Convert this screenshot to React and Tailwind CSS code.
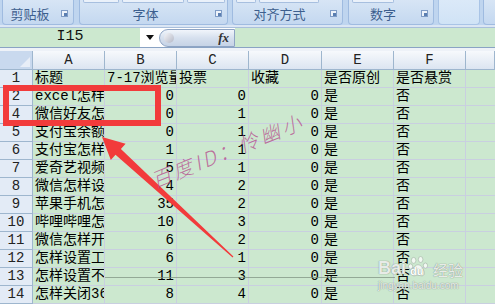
import React from "react"

const cols = [33, 72, 72, 72, 73, 72, 72, 29]
const letters = ["A", "B", "C", "D", "E", "F", ""]

const rows = [
    ["1", "标题", "7-17浏览量", "投票", "收藏", "是否原创", "是否悬赏"],
    ["2", "excel怎样", "0", "0", "0", "是", "否"],
    ["4", "微信好友怎", "0", "1", "0", "是", "否"],
    ["5", "支付宝余额", "0", "1", "0", "是", "否"],
    ["6", "支付宝怎样", "1", "1", "0", "是", "否"],
    ["7", "爱奇艺视频", "5", "1", "0", "是", "否"],
    ["8", "微信怎样设", "4", "2", "0", "是", "否"],
    ["9", "苹果手机怎", "35", "2", "0", "是", "否"],
    ["10", "哔哩哔哩怎", "10", "3", "0", "是", "否"],
    ["11", "微信怎样开", "6", "2", "0", "是", "否"],
    ["12", "怎样设置工", "6", "1", "0", "是", "否"],
    ["13", "怎样设置不", "11", "3", "0", "是", "否"],
    ["14", "怎样关闭360", "8", "4", "0", "是", "否"],
]

const cellFont = { fontFamily: "'Liberation Mono', 'Noto Sans CJK SC', monospace" }

const Launcher = () => (
    <span className="inline-block w-[7px] h-[7px] border border-[#7f9cc6] bg-[#eef3fa] relative">
        <span className="absolute right-0 bottom-0 w-[3px] h-[3px] bg-[#5a7eb0]" />
    </span>
)

const Group = ({ width, label, children }) => (
    <div className="h-[25px] shrink-0 rounded-b-[4px] border border-t-0 border-[#9fbbe0] bg-gradient-to-b from-[#d7e5f5] to-[#c4d8f0] relative" style={{ width }}>
        <div className="absolute left-0 right-0 top-0 flex gap-[3px] px-[3px]">{children}</div>
        {label &&
            <div className="absolute left-0 right-[16px] top-[6px] flex items-center justify-center text-[13px] leading-[16px] text-[#3d5f8e] whitespace-nowrap" style={{ fontFamily: "'Noto Sans CJK SC', sans-serif" }}>
                {label}
            </div>
        }
        {label && <div className="absolute right-[5px] top-[10px] flex"><Launcher /></div>}
    </div>
)

const TopBtn = ({ w }) => (
    <div className="h-[3px] shrink-0 rounded-b-[2px] border border-t-0 border-[#a7bfdf] bg-[#eaf1fa]" style={{ width: w }} />
)

export default function App() {
    return (
        <div className="w-[495px] h-[304px] overflow-hidden relative bg-[#cce8cf] select-none">
            {/* ribbon */}
            <div className="h-[25px] flex pl-[2px] bg-[#bfd5ef] overflow-hidden">
                <Group width={72} label="剪贴板" />
                <div className="w-[5px] shrink-0" />
                <Group width={149} label="字体">
                    <TopBtn w={36} /><TopBtn w={62} /><TopBtn w={38} />
                </Group>
                <div className="w-[4px] shrink-0" />
                <Group width={111} label="对齐方式">
                    <TopBtn w={20} /><TopBtn w={60} />
                </Group>
                <div className="w-[5px] shrink-0" />
                <Group width={86} label="数字">
                    <TopBtn w={42} />
                </Group>
                <div className="w-[4px] shrink-0" />
                <div className="w-[42px] h-[25px] shrink-0 rounded-b-[4px] border border-t-0 border-[#a9c4e6] bg-gradient-to-b from-[#dbe9f8] to-[#d0e3f6]" />
                <div className="w-[3px] shrink-0" />
                <Group width={20} />
            </div>
            <div className="h-[3px] bg-[#dbe6f4] border-b border-[#a9bfdc]" />

            {/* formula bar */}
            <div className="h-[20px] flex items-stretch bg-[#cce8cf] border-b border-[#8aa3c4]">
                <div className="w-[140px] flex items-center justify-center text-[15px] text-[#111]" style={cellFont}>I15</div>
                <div className="w-[19px] bg-white flex items-center justify-center">
                    <svg width="8" height="5" viewBox="0 0 8 5"><path d="M0 0 H8 L4 5 Z" fill="#111" /></svg>
                </div>
                <div className="w-[76px] bg-white flex items-center">
                    <div className="w-full h-[18px] rounded-l-full border border-[#8ea4c4] bg-gradient-to-b from-[#f1f5fb] via-[#d6e0ee] to-[#c6d3e6] relative flex items-center justify-end pr-[5px]">
                        <span className="absolute left-[4px] top-[3px] w-[10px] h-[10px] rounded-full bg-gradient-to-br from-[#f5f5f8] to-[#b4b8c6]" />
                        <span className="italic font-bold text-[13px] text-[#333] leading-none" style={{ fontFamily: "'Liberation Serif', serif" }}>fx</span>
                    </div>
                </div>
                <div className="flex-1" />
            </div>
            <div className="h-[3px] bg-[#eef2f8]" />

            {/* column header */}
            <div className="flex h-[19px]">
                <div className="shrink-0 h-full bg-[#c9d9ee] border-r border-b border-[#9eb6ce] relative" style={{ width: cols[0] }}>
                    <svg className="absolute right-[2px] bottom-[2px]" width="10" height="10" viewBox="0 0 10 10"><path d="M10 0 V10 H0 Z" fill="#e8eef7" /></svg>
                </div>
                {letters.map((l, i) => (
                    <div key={i} className="shrink-0 h-full flex items-center justify-center bg-gradient-to-b from-[#f7f9fc] to-[#dce5f1] border-r border-b border-[#9eb6ce] text-[14px] text-[#222]" style={{ width: cols[i + 1], ...cellFont }}>
                        {l}
                    </div>
                ))}
            </div>

            {/* rows */}
            {rows.map((r) => (
                <div key={r[0]} className="flex h-[18px]">
                    <div className="shrink-0 h-full flex items-center justify-center bg-[#e3ebf6] border-r border-b border-[#9eb6ce] text-[14px] text-[#222]" style={{ width: cols[0], ...cellFont }}>
                        {r[0]}
                    </div>
                    {r.slice(1).map((c, i) => {
                        const num = r[0] !== "1" && i >= 1 && i <= 3
                        return (
                            <div key={i} className={"shrink-0 h-full overflow-hidden whitespace-nowrap flex items-center border-r border-b border-[#c9cfe0] text-[14px] text-black px-[2px] " + (num ? "justify-end" : "justify-start")} style={{ width: cols[i + 1], ...cellFont }}>
                                {c}
                            </div>
                        )
                    })}
                    <div className="flex-1 h-full border-b border-[#c9cfe0]" />
                </div>
            ))}

            {/* stray line across row 13 */}
            <div className="absolute left-[105px] top-[277px] w-[290px] h-[1px] bg-[#7b8f7e]/70" />

            {/* red box */}
            <div className="absolute left-[3px] top-[85px] w-[158px] h-[41px] border-[6px] border-[#f23b3b]" />

            {/* red arrow */}
            <svg className="absolute left-0 top-0" width="495" height="304" viewBox="0 0 495 304">
                <polygon points="102,137 125.6,143.7 120.9,148.9 233.4,256.6 232.6,257.4 115.5,154.8 110.8,160" fill="#f23b3b" />
            </svg>

            {/* handwritten watermark */}
            <div className="absolute left-[152px] top-[166px] origin-left -rotate-[22deg] text-[20px] tracking-[3px] text-[#b5458a]/75 italic whitespace-nowrap" style={{ fontFamily: "'Noto Sans CJK SC', sans-serif", fontWeight: 300 }}>
                百度ID：怜幽小
            </div>

            {/* baidu jingyan watermark */}
            <div className="absolute left-[378px] top-[256px] flex flex-col items-start text-white/80 whitespace-nowrap" style={{ fontFamily: "'Liberation Sans', 'Noto Sans CJK SC', sans-serif", textShadow: "0 0 1px #8a9a8c, 0 0 1px #8a9a8c" }}>
                <div className="flex items-end text-[18px] font-bold leading-none">
                    <span>Bai</span>
                    <span className="relative w-[22px] h-[21px] mx-[1px] shrink-0">
                        <svg className="absolute inset-0" width="22" height="21" viewBox="0 0 22 24">
                            <g fill="rgba(255,255,255,0.75)" stroke="#9aa79c" strokeWidth="0.6">
                                <ellipse cx="6" cy="5" rx="2.6" ry="3.4" />
                                <ellipse cx="14" cy="4" rx="2.6" ry="3.4" />
                                <ellipse cx="2.5" cy="12" rx="2.4" ry="3" />
                                <ellipse cx="19.5" cy="11" rx="2.4" ry="3" />
                                <path d="M11 10 C15 10 19 17 18 21 C17 24 13 22 11 22 C9 22 5 24 4 21 C3 17 7 10 11 10 Z" />
                            </g>
                        </svg>
                        <span className="absolute left-[3px] bottom-0 text-[11px] text-white">du</span>
                    </span>
                    <span className="text-[15px] font-normal ml-[3px]" style={{ fontFamily: "'Noto Sans CJK SC', sans-serif" }}>经验</span>
                </div>
                <div className="text-[10px] leading-[12px] mt-[3px]">jingyan.baidu.com</div>
            </div>
        </div>
    )
}
